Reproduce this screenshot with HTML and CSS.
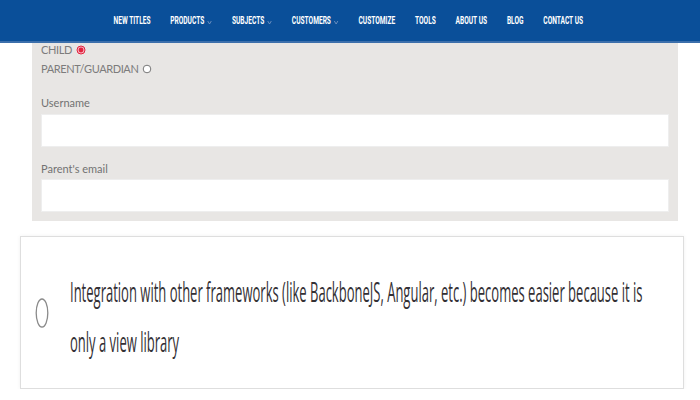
FILE: index.html
```html
<!DOCTYPE html>
<html lang="en">
<head>
<meta charset="utf-8">
<title>Signup</title>
<link rel="stylesheet" href="styles.css">
</head>
<body>
<nav class="topnav">
  <ul class="menu">
    <li class="menu-item">NEW TITLES</li>
    <li class="menu-item">PRODUCTS<svg class="chev" viewBox="0 0 8 5" width="8" height="5"><path d="M1 1 L4 4 L7 1" fill="none" stroke="#7f9cc6" stroke-width="1"/></svg></li>
    <li class="menu-item">SUBJECTS<svg class="chev" viewBox="0 0 8 5" width="8" height="5"><path d="M1 1 L4 4 L7 1" fill="none" stroke="#7f9cc6" stroke-width="1"/></svg></li>
    <li class="menu-item">CUSTOMERS<svg class="chev" viewBox="0 0 8 5" width="8" height="5"><path d="M1 1 L4 4 L7 1" fill="none" stroke="#7f9cc6" stroke-width="1"/></svg></li>
    <li class="menu-item">CUSTOMIZE</li>
    <li class="menu-item">TOOLS</li>
    <li class="menu-item">ABOUT US</li>
    <li class="menu-item">BLOG</li>
    <li class="menu-item">CONTACT US</li>
  </ul>
</nav>

<main class="page">
  <section class="panel">
    <div class="roles">
      <div class="role">CHILD <svg class="radio" viewBox="0 0 10 10" width="10" height="10"><circle cx="5" cy="5" r="4" fill="#f7b3bf" stroke="#e2243f" stroke-width="1"/><circle cx="5" cy="5" r="2.4" fill="#e2243f"/></svg></div>
      <div class="role">PARENT/GUARDIAN <svg class="radio" viewBox="0 0 10 10" width="10" height="10"><circle cx="5" cy="5" r="3.8" fill="#fff" stroke="#777" stroke-width="1"/></svg></div>
    </div>
    <label class="field-label first">Username</label>
    <div class="field"></div>
    <label class="field-label">Parent's email</label>
    <div class="field"></div>
  </section>

  <section class="answer">
    <svg class="answer-radio" viewBox="0 0 14 32" width="14" height="32"><ellipse cx="7" cy="16" rx="5.8" ry="14" fill="none" stroke="#8a8a8a" stroke-width="1.3"/></svg>
    <div class="answer-body">
      <p class="answer-text">Integration with other frameworks (like BackboneJS, Angular, etc.) becomes easier because it is only a view library</p>
    </div>
  </section>
</main>
</body>
</html>
```

FILE: styles.css
```css
html, body {
  margin: 0;
  padding: 0;
  background: #ffffff;
  overflow: hidden;
}

body {
  font-family: "Lato", "Open Sans", sans-serif;
}

.topnav {
  height: 41px;
  background: #0a4f99;
  border-bottom: 2px solid #3c6fab;
  display: flex;
  justify-content: center;
  align-items: center;
  overflow: hidden;
}

.menu {
  list-style: none;
  margin: 0 0 0 -4px;
  padding: 0;
  display: flex;
  flex-shrink: 0;
  align-items: center;
  gap: 33px;
  transform: scaleX(0.6);
  transform-origin: center;
  white-space: nowrap;
}

.menu-item {
  font-family: "Roboto", "Liberation Sans", sans-serif;
  font-weight: 700;
  font-size: 11px;
  color: #ffffff;
  display: flex;
  align-items: center;
  line-height: 14px;
  margin-top: 1px;
}

.chev {
  margin-left: 5px;
  margin-top: 2px;
}

.page {
  display: block;
}

.panel {
  margin: 0 22px 0 32px;
  background: #e8e6e4;
  padding: 1px 9px 9px 9px;
}

.roles {
  display: flex;
  flex-direction: column;
  gap: 7px;
}

.role {
  font-size: 11px;
  line-height: 12px;
  height: 12px;
  color: #7c7c7c;
  letter-spacing: -0.4px;
  display: flex;
  align-items: center;
  gap: 4px;
}

.radio {
  display: block;
  margin-top: -1px;
}

.field-label {
  display: block;
  font-size: 11px;
  line-height: 14px;
  color: #727272;
  margin-top: 15px;
}

.field-label.first {
  margin-top: 21px;
}

.field {
  height: 31px;
  background: #ffffff;
  border: 1px solid #eeeeee;
  margin-top: 3px;
}

.field-label.first + .field {
  margin-top: 4px;
}

.answer {
  margin: 15px 16px 0 20px;
  height: 151px;
  border: 1px solid #dedede;
  box-shadow: 0 0 4px rgba(0, 0, 0, 0.06);
  display: flex;
  align-items: center;
  padding-left: 14px;
}

.answer-radio {
  display: block;
  flex-shrink: 0;
}

.answer-body {
  flex: 1;
  min-width: 0;
  overflow: hidden;
  margin-left: 21px;
}

.answer-text {
  margin: 8px 0 0 0;
  width: 1215px;
  font-family: "Open Sans", "Noto Sans", sans-serif;
  font-size: 27px;
  line-height: 50px;
  color: #333034;
  transform: scaleX(0.482);
  transform-origin: left center;
}
```
